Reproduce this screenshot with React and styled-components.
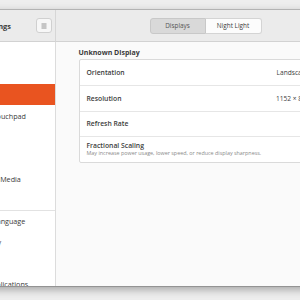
import React from "react"
import styled, { createGlobalStyle } from "styled-components"

const GlobalStyle = createGlobalStyle`
  html, body {
    margin: 0;
    padding: 0;
    background: #eeeeee;
    overflow: hidden;
  }
  body {
    font-family: "Open Sans", "Noto Sans", sans-serif;
    color: #3d3d3d;
  }
`

const Desk = styled.div`
  width: 300px;
  height: 300px;
  padding-top: 10px;
  box-sizing: border-box;
  overflow: hidden;
`

const Window = styled.div`
  width: 415px;
  height: 276px;
  margin-left: -60px;
  display: grid;
  grid-template-columns: 116px 1fr;
  grid-template-rows: 32px 1fr;
  background: #fafafa;
  box-shadow: 0 0 0 1px rgba(0, 0, 0, 0.18), 0 3px 9px rgba(0, 0, 0, 0.35);
  overflow: hidden;
`

const HeaderLeft = styled.div`
  display: grid;
  grid-template-columns: 1fr auto 1fr;
  align-items: center;
  background: #ebebeb;
  border-bottom: 1px solid #d2d2d2;
  border-right: 1px solid #d6d6d6;
  padding-right: 3px;
`

const Title = styled.div`
  grid-column: 2;
  font-size: 7.4px;
  font-weight: 700;
  color: #3a3a3a;
`

const MenuButton = styled.div`
  grid-column: 3;
  justify-self: end;
  width: 16px;
  height: 15px;
  box-sizing: border-box;
  border: 1px solid #d0d0d0;
  border-radius: 3px;
  background: #f7f7f7;
  display: flex;
  align-items: center;
  justify-content: center;
`

const HeaderRight = styled.div`
  display: flex;
  align-items: center;
  justify-content: center;
  background: #ebebeb;
  border-bottom: 1px solid #d2d2d2;
`

const Switcher = styled.div`
  display: flex;
  height: 16px;
`

const SwitchButton = styled.div`
  width: 56px;
  box-sizing: border-box;
  display: flex;
  align-items: center;
  justify-content: center;
  font-size: 6.4px;
  color: ${p => (p.$active ? "#555" : "#3a3a3a")};
  background: ${p => (p.$active ? "#d9d9d9" : "#fcfcfc")};
  border: 1px solid ${p => (p.$active ? "#c8c8c8" : "#d4d4d4")};
  border-radius: ${p => (p.$first ? "3px 0 0 3px" : "0 3px 3px 0")};
  ${p => !p.$first && "border-left: none;"}
`

const Sidebar = styled.div`
  background: #ffffff;
  border-right: 1px solid #dcdcdc;
  overflow: hidden;
`

const SideItem = styled.div`
  height: 21px;
  box-sizing: border-box;
  display: flex;
  align-items: center;
  padding-left: 21px;
  font-size: 7.2px;
  white-space: nowrap;
  color: ${p => (p.$selected ? "#ffffff" : "#3a3a3a")};
  background: ${p => (p.$selected ? "#e95420" : "transparent")};
  ${p => p.$separator && "border-top: 1px solid #e2e2e2;"}
`

const Main = styled.div`
  background: #fafafa;
  padding-top: 4px;
`

const Content = styled.div`
  width: 254px;
  margin: 0 auto;
`

const SectionLabel = styled.div`
  font-size: 7px;
  font-weight: 700;
  color: #3a3a3a;
  height: 13px;
  display: flex;
  align-items: center;
`

const Card = styled.div`
  background: #ffffff;
  border: 1px solid #dadada;
  border-radius: 2px;
`

const Row = styled.div`
  height: ${p => p.$h || 25}px;
  box-sizing: border-box;
  display: flex;
  align-items: center;
  justify-content: space-between;
  padding: 0 7px;
  ${p => !p.$last && "border-bottom: 1px solid #e6e6e6;"}
`

const RowText = styled.div`
  display: flex;
  flex-direction: column;
`

const RowTitle = styled.div`
  font-size: 6.8px;
  font-weight: 600;
  color: #3c3c3c;
  line-height: 8px;
`

const RowSub = styled.div`
  font-size: 5.4px;
  color: #8a8a8a;
  line-height: 7px;
`

const Value = styled.div`
  display: flex;
  align-items: center;
  gap: 9px;
  font-size: 6.6px;
  color: #3c3c3c;
`

const Toggle = styled.div`
  width: 20px;
  height: 11px;
  border-radius: 6px;
  background: #e1dedb;
  border: 1px solid #cdc7c2;
`

const Chevron = () => (
  <svg width="6" height="6" viewBox="0 0 6 6">
    <path d="M1 2 L3 4 L5 2" fill="none" stroke="#555" strokeWidth="0.9" />
  </svg>
)

const items = [
  { name: "Sound" },
  { name: "Power" },
  { name: "Displays", selected: true },
  { name: "Mouse & Touchpad" },
  { name: "Keyboard" },
  { name: "Printers" },
  { name: "Removable Media" },
  { name: "Color" },
  { name: "Region & Language", separator: true },
  { name: "Accessibility" },
  { name: "Users" },
  { name: "Default Applications" },
  { name: "Date & Time" },
]

const App = () => (
  <>
    <GlobalStyle />
    <Desk>
      <Window>
        <HeaderLeft>
          <Title>Settings</Title>
          <MenuButton>
            <svg width="6" height="6" viewBox="0 0 6 6">
              <path d="M0.5 1 H5.5 M0.5 3 H5.5 M0.5 5 H5.5" stroke="#888" strokeWidth="0.9" />
            </svg>
          </MenuButton>
        </HeaderLeft>
        <HeaderRight>
          <Switcher>
            <SwitchButton $active $first>Displays</SwitchButton>
            <SwitchButton>Night Light</SwitchButton>
          </Switcher>
        </HeaderRight>
        <Sidebar>
          {items.map(it => (
            <SideItem key={it.name} $selected={it.selected} $separator={it.separator}>
              {it.name}
            </SideItem>
          ))}
        </Sidebar>
        <Main>
          <Content>
            <SectionLabel>Unknown Display</SectionLabel>
            <Card>
              <Row $h={26}>
                <RowTitle>Orientation</RowTitle>
                <Value>Landscape <Chevron /></Value>
              </Row>
              <Row $h={26}>
                <RowTitle>Resolution</RowTitle>
                <Value>1152 × 864 <Chevron /></Value>
              </Row>
              <Row>
                <RowTitle>Refresh Rate</RowTitle>
                <Value><Chevron /></Value>
              </Row>
              <Row $last>
                <RowText>
                  <RowTitle>Fractional Scaling</RowTitle>
                  <RowSub>May increase power usage, lower speed, or reduce display sharpness.</RowSub>
                </RowText>
                <Toggle />
              </Row>
            </Card>
          </Content>
        </Main>
      </Window>
    </Desk>
  </>
)

export default App
